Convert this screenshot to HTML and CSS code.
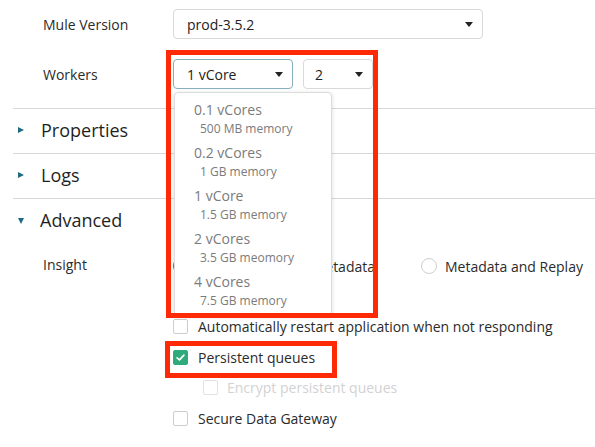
FILE: index.html
```html
<!DOCTYPE html>
<html>
<head>
<meta charset="utf-8">
<link rel="stylesheet" href="styles.css">
</head>
<body>
<div class="page">
  <div class="form-top">
    <div class="row">
      <div class="label">Mule Version</div>
      <div class="select select-wide"><span>prod-3.5.2</span><i class="caret"></i></div>
    </div>
    <div class="row">
      <div class="label">Workers</div>
      <div class="select-group">
        <div class="select-anchor">
          <div class="select select-focus select-size"><span>1 vCore</span><i class="caret"></i></div>
          <div class="menu">
            <div class="menu-item"><div class="mi-title">0.1 vCores</div><div class="mi-sub">500 MB memory</div></div>
            <div class="menu-item"><div class="mi-title">0.2 vCores</div><div class="mi-sub">1 GB memory</div></div>
            <div class="menu-item"><div class="mi-title">1 vCore</div><div class="mi-sub">1.5 GB memory</div></div>
            <div class="menu-item"><div class="mi-title">2 vCores</div><div class="mi-sub">3.5 GB meomory</div></div>
            <div class="menu-item"><div class="mi-title">4 vCores</div><div class="mi-sub">7.5 GB memory</div></div>
          </div>
        </div>
        <div class="select select-count"><span>2</span><i class="caret"></i></div>
      </div>
    </div>
  </div>

  <div class="section">
    <div class="section-head"><i class="tri-right"></i><span>Properties</span></div>
  </div>
  <div class="section">
    <div class="section-head"><i class="tri-right"></i><span>Logs</span></div>
  </div>
  <div class="section">
    <div class="section-head"><i class="tri-down"></i><span>Advanced</span></div>
    <div class="adv-body">
      <div class="opt-row">
        <div class="label label-top">Insight</div>
        <div class="radios">
          <label class="radio-opt opt-a"><i class="radio radio-on"></i><span>Disabled</span></label>
          <label class="radio-opt opt-b"><i class="radio"></i><span>Metadata</span></label>
          <label class="radio-opt"><i class="radio"></i><span>Metadata and Replay</span></label>
        </div>
      </div>
      <div class="opt-row"></div>
      <div class="opt-row check-row">
        <i class="checkbox"></i><span>Automatically restart application when not responding</span>
      </div>
      <div class="opt-row check-row">
        <i class="checkbox checkbox-on"><svg viewBox="0 0 16 16" width="11" height="11"><path d="M3 8.5 L6.5 11.5 L13 4.5" fill="none" stroke="#fff" stroke-width="2.4" stroke-linecap="round" stroke-linejoin="round"/></svg></i><span>Persistent queues</span>
      </div>
      <div class="opt-row check-row sub-row disabled">
        <i class="checkbox checkbox-dis"></i><span>Encrypt persistent queues</span>
      </div>
      <div class="opt-row check-row">
        <i class="checkbox"></i><span>Secure Data Gateway</span>
      </div>
    </div>
  </div>

  <div class="highlight hl-workers"></div>
  <div class="highlight hl-queues"></div>
</div>
</body>
</html>
```

FILE: styles.css
```css
html, body {
  margin: 0;
  padding: 0;
  background: #fff;
}
body {
  font-family: "Open Sans", "Liberation Sans", sans-serif;
  font-size: 14px;
  color: #2b2b2b;
  width: 595px;
  height: 447px;
  overflow: hidden;
}
.page {
  position: relative;
  padding-left: 13px;
}
.form-top {
  padding-top: 9px;
  padding-left: 30px;
  padding-bottom: 19px;
  display: flex;
  flex-direction: column;
  gap: 20px;
}
.row {
  display: flex;
  align-items: center;
  height: 30px;
}
.label {
  width: 130px;
  flex: none;
  font-size: 14px;
  color: #2b2b2b;
}
.select {
  box-sizing: border-box;
  height: 30px;
  border: 1px solid #d9d9d9;
  border-radius: 4px;
  display: flex;
  align-items: center;
  justify-content: space-between;
  padding: 0 9px 0 13px;
  font-size: 14px;
  color: #222;
  background: #fff;
}
.select-wide { width: 310px; }
.select-size { width: 120px; }
.select-count { width: 70px; padding-left: 11px; }
.select-focus { border-color: #86aebd; }
.caret {
  width: 0;
  height: 0;
  border-left: 4px solid transparent;
  border-right: 4px solid transparent;
  border-top: 5px solid #222;
}
.select-group {
  display: flex;
  gap: 10px;
}
.select-anchor {
  position: relative;
}
.menu {
  position: absolute;
  left: 1px;
  top: 33px;
  width: 158px;
  box-sizing: border-box;
  background: #fff;
  border: 1px solid #dcdcdc;
  border-radius: 4px;
  box-shadow: 0 1px 4px rgba(0,0,0,0.15);
  padding: 4px 0 3px 19px;
  z-index: 5;
}
.menu-item {
  padding: 3px 0;
}
.mi-title {
  font-size: 14px;
  line-height: 20px;
  color: #7b7b7b;
}
.mi-sub {
  font-size: 12px;
  line-height: 17px;
  color: #7b7b7b;
  padding-left: 6px;
}
.section {
  border-top: 1px solid #d8d8d8;
}
.section-head {
  height: 44px;
  box-sizing: border-box;
  padding: 0 0 3px 5px;
  display: flex;
  align-items: center;
  font-size: 18px;
  color: #1f1f1f;
}
.tri-right {
  width: 0;
  height: 0;
  border-top: 3.5px solid transparent;
  border-bottom: 3.5px solid transparent;
  border-left: 6px solid #1f6c82;
  margin-right: 17px;
}
.tri-down {
  width: 0;
  height: 0;
  border-left: 3.5px solid transparent;
  border-right: 3.5px solid transparent;
  border-top: 6px solid #1f6c82;
  margin-right: 16px;
  margin-top: 2px;
}
.adv-body {
  padding: 8px 0 0 30px;
}
.opt-row {
  height: 30.4px;
  display: flex;
  align-items: center;
}
.label-top {
  margin-top: -4px;
}
.radios {
  display: flex;
  align-items: center;
}
.radio-opt {
  display: flex;
  align-items: center;
}
.opt-a { margin-right: 35px; }
.opt-b { margin-right: 46px; }
.radio {
  box-sizing: border-box;
  width: 16px;
  height: 16px;
  border: 1px solid #cfcfcf;
  border-radius: 50%;
  margin-right: 8px;
  background: #fff;
}
.radio-on {
  border: 5px solid #2a8a8f;
}
.check-row {
  padding-left: 130px;
}
.checkbox {
  box-sizing: border-box;
  width: 15px;
  height: 15px;
  border: 1px solid #cdcdcd;
  border-radius: 2px;
  margin-right: 10px;
  background: #fff;
  display: flex;
  align-items: center;
  justify-content: center;
  flex: none;
}
.checkbox-on {
  background: #2eaa7b;
  border-color: #2eaa7b;
}
.checkbox-dis {
  border-color: #e2e2e2;
}
.sub-row {
  padding-left: 160px;
}
.sub-row .checkbox {
  margin-right: 9px;
}
.disabled span {
  color: #d2d2d2;
}
.highlight {
  position: absolute;
  border: 5px solid #fe2a06;
  box-sizing: border-box;
  z-index: 10;
}
.hl-workers {
  left: 166px;
  top: 50px;
  width: 212px;
  height: 268px;
}
.hl-queues {
  left: 165px;
  top: 341px;
  width: 172px;
  height: 37px;
}
```
